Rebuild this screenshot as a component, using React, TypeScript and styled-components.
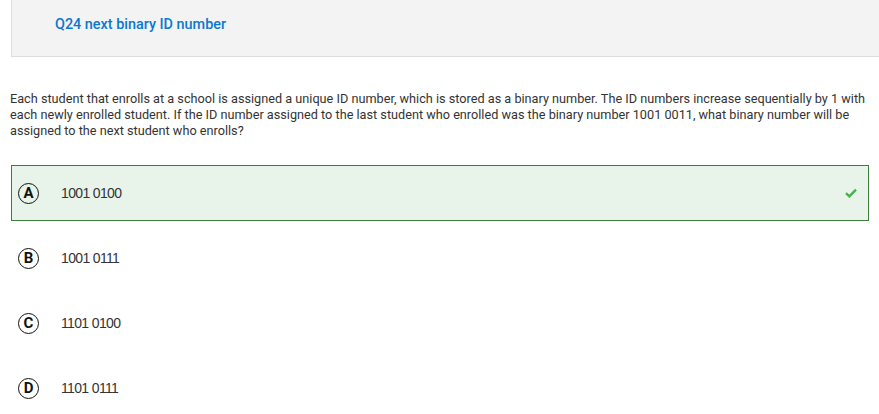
import React from "react";
import styled, { createGlobalStyle } from "styled-components";

const Global = createGlobalStyle`
  html, body { margin: 0; padding: 0; background: #ffffff; }
  body { font-family: Roboto, "Liberation Sans", sans-serif; }
`;

const Page = styled.div`
  width: 879px;
  overflow: hidden;
`;

const Header = styled.div`
  margin-left: 11px;
  height: 56px;
  background: #f3f3f3;
  border-left: 1px solid #dcdcdc;
  border-bottom: 1px solid #dcdcdc;
  display: flex;
  align-items: center;
  padding-left: 43px;
  box-sizing: content-box;
`;

const Title = styled.h1`
  margin: 0;
  font-family: Roboto, sans-serif;
  font-size: 14.4px;
  font-weight: 500;
  color: #0b78cf;
  position: relative;
  top: -4px;
`;

const Question = styled.p`
  margin: 34px 0 0 10px;
  width: 862px;
  font-family: Roboto, sans-serif;
  font-size: 12.7px;
  line-height: 16px;
  color: #333333;
`;

const Options = styled.ul`
  list-style: none;
  margin: 26px 0 0 11px;
  padding: 0;
  width: 858px;
  display: flex;
  flex-direction: column;
  gap: 9px;
`;

const Option = styled.li<{ $correct?: boolean }>`
  height: 56px;
  box-sizing: border-box;
  display: flex;
  align-items: center;
  padding: 0 11px 0 6px;
  border: 1px solid ${(p) => (p.$correct ? "#3b7d3b" : "transparent")};
  background: ${(p) => (p.$correct ? "#e8f3e9" : "transparent")};
`;

const Letter = styled.span`
  width: 21px;
  height: 21px;
  box-sizing: border-box;
  border: 1.6px solid #111;
  border-radius: 50%;
  display: flex;
  align-items: center;
  justify-content: center;
  font-family: Roboto, sans-serif;
  font-weight: 700;
  font-size: 15px;
  line-height: 1;
  color: #111;
  flex: none;
`;

const AnswerText = styled.span`
  margin-left: 22px;
  font-family: "Liberation Sans", Arial, sans-serif;
  font-size: 14px;
  color: #333;
  letter-spacing: -0.65px;
  flex: 1;
`;

const Check = styled.svg`
  width: 12px;
  height: 10px;
  flex: none;
`;

const answers = [
  { key: "A", text: "1001 0100", correct: true },
  { key: "B", text: "1001 0111" },
  { key: "C", text: "1101 0100" },
  { key: "D", text: "1101 0111" },
];

export default function App() {
  return (
    <Page>
      <Global />
      <Header>
        <Title>Q24 next binary ID number</Title>
      </Header>
      <Question>
        Each student that enrolls at a school is assigned a unique ID number, which is stored as a binary number. The ID numbers increase sequentially by 1 with each newly enrolled student. If the ID number assigned to the last student who enrolled was the binary number 1001 0011, what binary number will be assigned to the next student who enrolls?
      </Question>
      <Options>
        {answers.map((a) => (
          <Option key={a.key} $correct={a.correct}>
            <Letter>{a.key}</Letter>
            <AnswerText>{a.text}</AnswerText>
            {a.correct && (
              <Check viewBox="0 0 12 10">
                <path d="M1 5.2 L4.4 8.4 L11 1.6" fill="none" stroke="#4caf50" strokeWidth="2.4" />
              </Check>
            )}
          </Option>
        ))}
      </Options>
    </Page>
  );
}
